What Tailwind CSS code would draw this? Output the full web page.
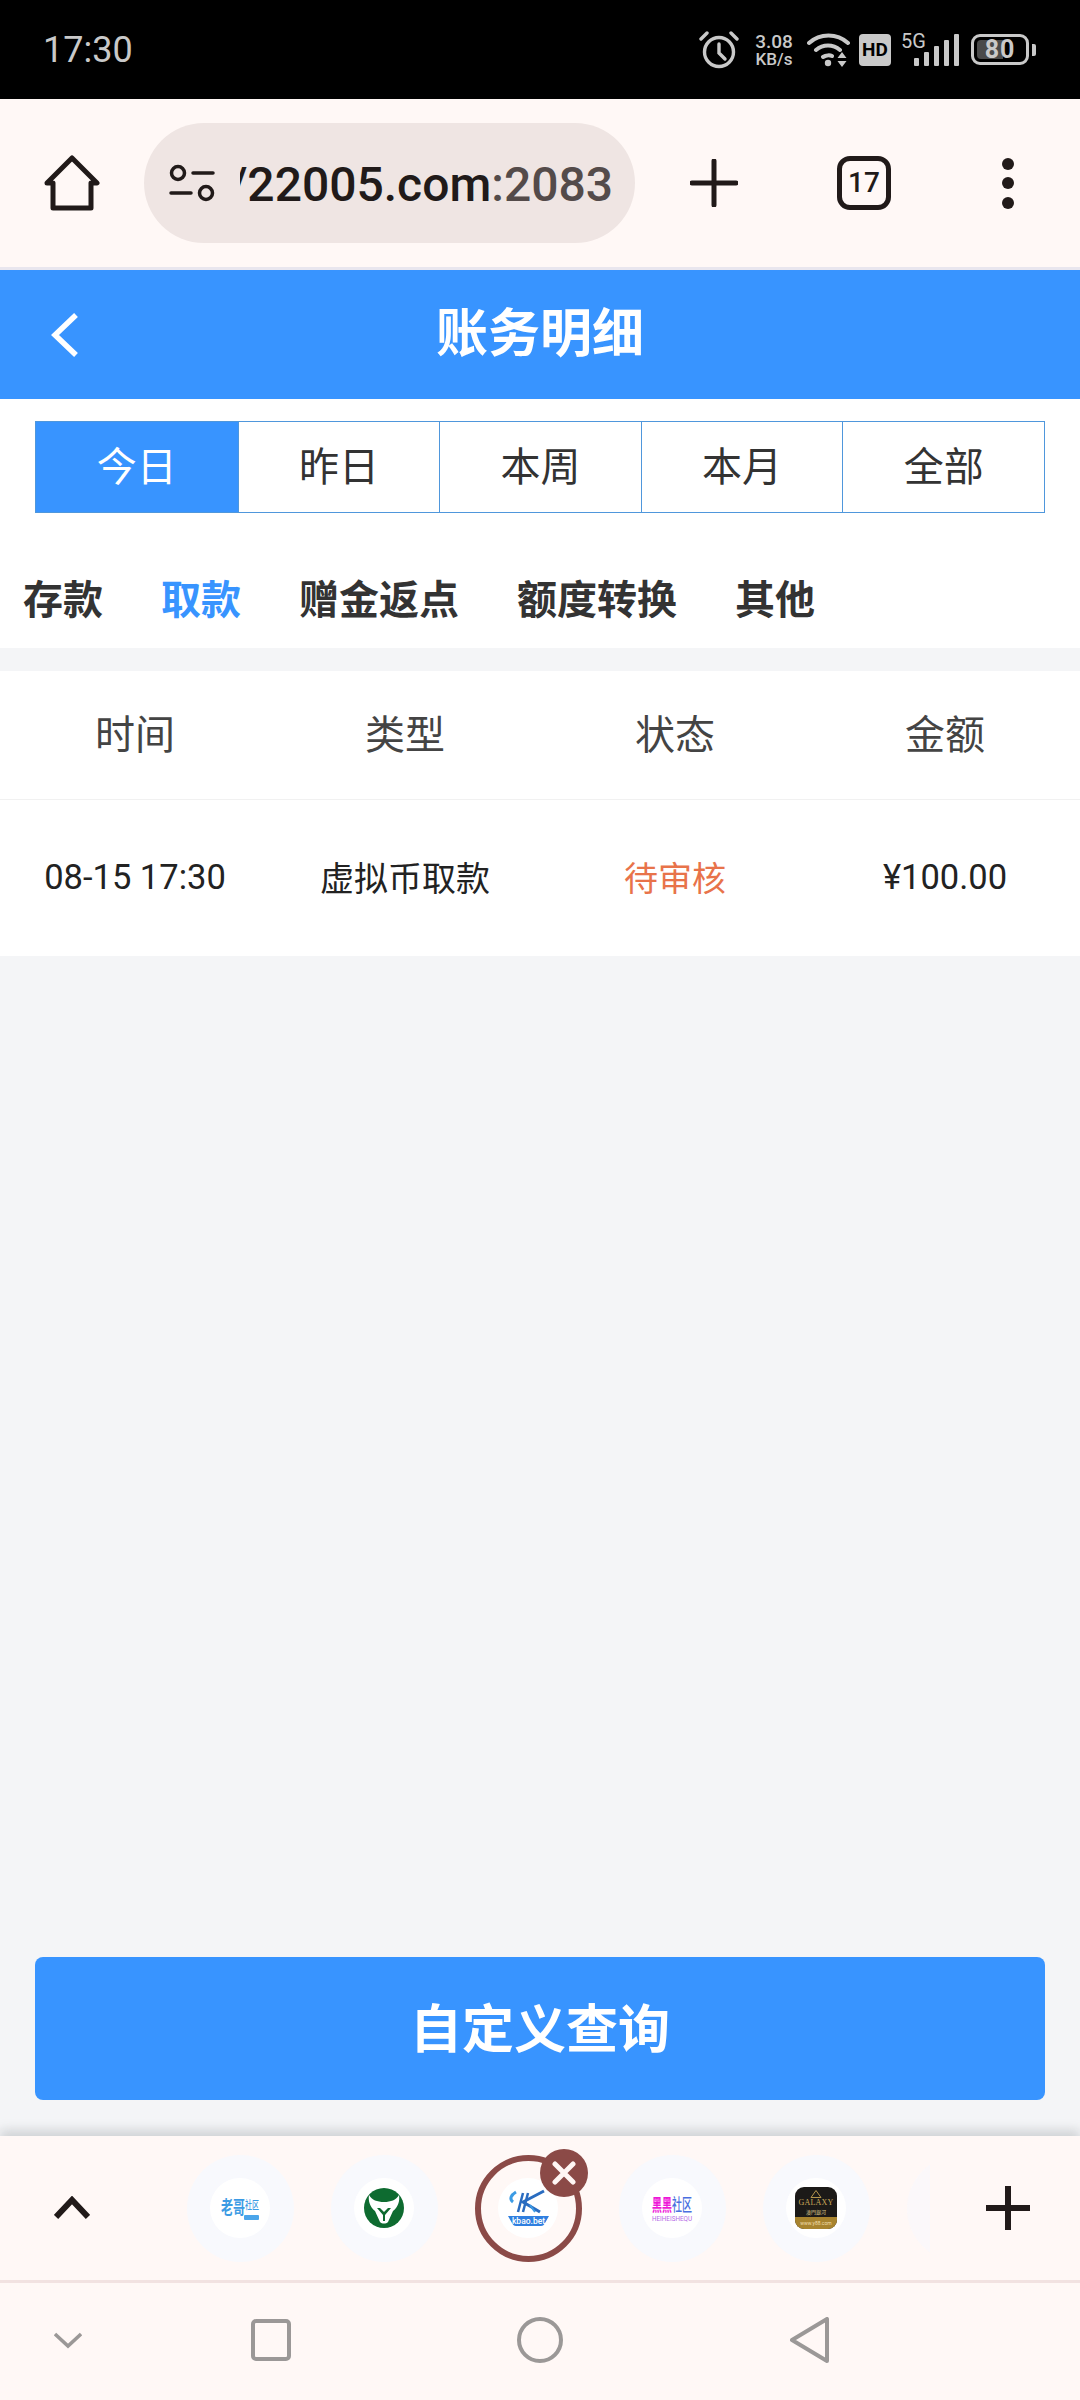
<!DOCTYPE html>
<html lang="zh-CN">
<head>
<meta charset="utf-8">
<title>账务明细</title>
<script src="https://cdn.jsdelivr.net/npm/@tailwindcss/browser@4"></script>
</head>
<body class="w-[1080px] h-[2400px] overflow-hidden flex flex-col bg-[#f4f5f7] font-['Roboto','Noto_Sans_CJK_SC',sans-serif] text-[#333]">

<!-- status bar -->
<div class="h-[99px] shrink-0 bg-black flex items-center justify-between pl-[43px] pr-[44px] text-[#c9c9c9]">
  <span class="text-[36px] leading-none font-['Roboto']">17:30</span>
  <div class="flex items-center">
    <svg width="40" height="38" viewBox="0 0 40 38" fill="none" stroke="#c9c9c9" stroke-width="3.4" stroke-linecap="round">
      <circle cx="20" cy="21" r="14.5"/><path d="M20 13v9l6 6"/><path d="M2 8l6-6M38 8l-6-6"/>
    </svg>
    <div class="w-[46px] ml-[12px] flex flex-col items-center font-['Roboto'] font-medium">
      <span class="text-[19px] leading-[19px]">3.08</span>
      <span class="text-[17px] leading-[17px]">KB/s</span>
    </div>
    <svg class="ml-[10px]" width="44" height="36" viewBox="0 0 44 36" fill="none" stroke="#c9c9c9" stroke-width="4" stroke-linecap="round">
      <path d="M2 11C13 1 30 1 41 11M9 18c7-6 17-6 24 0M16 25c3-2 7-2 9-1"/>
      <circle cx="21" cy="31" r="3.2" fill="#c9c9c9" stroke="none"/>
      <path d="M35 20l4.500 6h-9zM30.500 29h9l-4.500 6z" fill="#c9c9c9" stroke="none"/>
    </svg>
    <div class="ml-[8px] w-[32px] h-[32px] rounded-[4px] bg-[#c9c9c9] flex items-center justify-center text-black text-[19px] font-bold leading-none font-['Roboto']">HD</div>
    <div class="relative ml-[10px] w-[60px] h-[32px]">
      <span class="absolute left-0 top-[-3px] text-[20px] leading-none font-['Roboto']">5G</span>
      <svg class="absolute left-[13px] top-0" width="47" height="32" viewBox="0 0 47 32" fill="#c9c9c9">
        <rect x="0" y="24" width="5" height="8" rx="1"/><rect x="10" y="18" width="5" height="14" rx="1"/><rect x="20" y="12" width="5" height="20" rx="1"/><rect x="30" y="6" width="5" height="26" rx="1"/><rect x="40" y="0" width="5" height="32" rx="1"/>
      </svg>
    </div>
    <div class="ml-[10px] relative w-[58px] h-[31px] rounded-[9px] border-[3px] border-[#c9c9c9] flex items-center justify-center">
      <div class="absolute left-[3px] top-[3px] bottom-[3px] w-[26px] rounded-l-[4px] bg-[#4a4a4a]"></div>
      <span class="relative text-[25px] leading-none font-bold font-['Roboto'] tracking-[1px]">80</span>
    </div>
    <div class="ml-[3px] w-[4px] h-[12px] rounded-r-[2px] bg-[#c9c9c9]"></div>
  </div>
</div>

<!-- browser toolbar -->
<div class="h-[171px] shrink-0 bg-[#fff8f6] border-b-[3px] border-[#e9e6ee] flex items-center relative text-[#211a19]">
  <div class="w-[144px] shrink-0 flex justify-center">
    <svg width="56" height="56" viewBox="0 0 56 56" fill="none" stroke="#211a19" stroke-width="5" stroke-linejoin="round" stroke-linecap="round">
      <path d="M9 28H3L28 3l25 25h-6v25H9z"/>
    </svg>
  </div>
  <div class="w-[491px] h-[120px] shrink-0 rounded-full bg-[#efe5e3] flex items-center pl-[25px]">
    <svg width="46" height="38" viewBox="0 0 46 38" fill="none" stroke="#211a19" stroke-width="3.500" stroke-linecap="round">
      <circle cx="9" cy="9" r="6.500"/><path d="M24 9h20M2 29h20"/><circle cx="37" cy="29" r="6.500"/>
    </svg>
    <div class="ml-[25px] w-[373px] overflow-hidden flex justify-end whitespace-nowrap text-[48px] leading-[64px] font-medium font-['Roboto'] pt-[3px]">
      <span>/22005.com<span class="text-[#544b4a]">:2083</span></span>
    </div>
  </div>
  <div class="flex-1 flex items-center">
    <div class="w-[150px] flex justify-center pl-[8px]">
      <svg width="48" height="48" viewBox="0 0 48 48" stroke="#211a19" stroke-width="5" stroke-linecap="round"><path d="M24 2v44M2 24h44"/></svg>
    </div>
    <div class="w-[54px] h-[54px] ml-[52px] rounded-[13px] border-[5px] border-[#211a19] flex items-center justify-center text-[28px] font-medium leading-none font-['Roboto']">17</div>
    <div class="ml-[111px] flex flex-col gap-[7.500px]">
      <span class="block w-[12px] h-[12px] rounded-full bg-[#211a19]"></span>
      <span class="block w-[12px] h-[12px] rounded-full bg-[#211a19]"></span>
      <span class="block w-[12px] h-[12px] rounded-full bg-[#211a19]"></span>
    </div>
  </div>
</div>

<!-- page header -->
<div class="h-[129px] shrink-0 bg-[#3894ff] relative flex items-center justify-center text-white">
  <svg class="absolute left-[50px] top-[42px]" width="30" height="46" viewBox="0 0 30 46" fill="none" stroke="#fff" stroke-width="5.500"><path d="M26 3L5 23l21 20"/></svg>
  <span class="text-[52px] leading-none font-bold font-['Noto_Sans_CJK_SC'] mt-[-10px]">账务明细</span>
</div>

<!-- range and type filters -->
<div class="h-[249px] shrink-0 bg-white flex flex-col">
  <div class="mt-[22px] mx-[35px] h-[92px] grid grid-cols-5 border border-[#4f97dc] text-[40px] font-['Noto_Sans_CJK_SC'] font-normal">
    <div class="bg-[#3894ff] text-white flex items-center justify-center pb-[7px]">今日</div>
    <div class="border-l border-[#4f97dc] flex items-center justify-center pb-[7px]">昨日</div>
    <div class="border-l border-[#4f97dc] flex items-center justify-center pb-[7px]">本周</div>
    <div class="border-l border-[#4f97dc] flex items-center justify-center pb-[7px]">本月</div>
    <div class="border-l border-[#4f97dc] flex items-center justify-center pb-[7px]">全部</div>
  </div>
  <div class="mt-[54px] pl-[23px] flex gap-[58px] text-[40px] leading-[60px] font-bold font-['Noto_Sans_CJK_SC']">
    <span>存款</span>
    <span class="text-[#3894ff]">取款</span>
    <span>赠金返点</span>
    <span>额度转换</span>
    <span>其他</span>
  </div>
</div>

<!-- records -->
<div class="flex-1 flex flex-col pt-[23px]">
  <div class="bg-white">
    <div class="h-[129px] grid grid-cols-4 items-center text-center text-[40px] font-['Noto_Sans_CJK_SC'] font-normal text-[#444] border-b border-[#f1f1f1] pb-[6px]">
      <span>时间</span><span>类型</span><span>状态</span><span>金额</span>
    </div>
    <div class="h-[156px] grid grid-cols-4 items-center text-center text-[34.500px] font-['Roboto','Noto_Sans_CJK_SC'] text-[#222]">
      <span>08-15 17:30</span>
      <span class="text-[34px] font-['Noto_Sans_CJK_SC'] font-normal pb-[4px]">虚拟币取款</span>
      <span class="text-[34px] text-[#e8734a] font-['Noto_Sans_CJK_SC'] font-normal pb-[4px]">待审核</span>
      <span>¥100.00</span>
    </div>
  </div>
  <div class="mt-auto mx-[35px] mb-[36px] h-[143px] rounded-[8px] bg-[#3894ff] flex items-center justify-center text-white text-[52px] font-bold font-['Noto_Sans_CJK_SC'] pb-[6px]">自定义查询</div>
</div>

<!-- tab strip -->
<div class="h-[147px] shrink-0 bg-[#fff8f6] border-b-[3px] border-[#f2e2e1] flex items-center relative shadow-[0_-6px_10px_rgba(120,125,130,0.28)]">
  <div class="w-[144px] shrink-0 flex justify-center">
    <svg width="36" height="24" viewBox="0 0 36 24" fill="none" stroke="#211a19" stroke-width="6"><path d="M2 21L18 4l16 17"/></svg>
  </div>
  <div class="w-[24px] shrink-0"></div>
  <div class="w-[762px] shrink-0 overflow-hidden flex items-center h-full">
    <div class="w-[144px] shrink-0 flex justify-center">
      <div class="w-[107px] h-[107px] rounded-full bg-[#f8f9fd] flex items-center justify-center">
        <div class="w-[60px] h-[60px] rounded-full bg-white flex items-center justify-center">
          <svg class="overflow-visible" width="38" height="28" viewBox="0 0 38 28">
            <text transform="scale(1 1.5)" x="0" y="13" font-family="Noto Sans CJK SC" font-size="12" font-weight="700" fill="#3c9be4">老哥</text>
            <text transform="scale(1 1.7)" x="24" y="9" font-family="Noto Sans CJK SC" font-size="7" font-weight="500" fill="#3c9be4">社区</text>
            <rect x="23" y="21" width="15" height="5" rx="1" fill="#4ba5ea"/>
          </svg>
        </div>
      </div>
    </div>
    <div class="w-[144px] shrink-0 flex justify-center">
      <div class="w-[107px] h-[107px] rounded-full bg-[#f8f9fd] flex items-center justify-center">
        <div class="w-[60px] h-[60px] rounded-full bg-white flex items-center justify-center">
          <svg width="40" height="40" viewBox="0 0 40 40">
            <circle cx="20" cy="20" r="20" fill="#0e6b30"/>
            <path d="M5 7c3 5 8 7 15 7s12-2 15-7c1 6-1 12-6 16l-5 11c-2 2-6 2-8 0l-5-11C6 19 4 13 5 7z" fill="#fff"/>
            <path d="M13 20l6 7v6h2v-6l6-7-3 0-4 4-4-4z" fill="#0e6b30"/>
          </svg>
        </div>
      </div>
    </div>
    <div class="w-[144px] shrink-0 flex justify-center">
      <div class="w-[107px] h-[107px] rounded-full border-[6px] border-[#8b4a47] flex items-center justify-center">
        <div class="w-[60px] h-[60px] rounded-full bg-white flex items-center justify-center">
          <svg class="overflow-visible" width="41" height="36" viewBox="0 0 41 36">
            <path d="M8 2C3 5 1 9 5 12" fill="none" stroke="#3c9be4" stroke-width="3"/>
            <path d="M15 3L10 22M20 3L15 22" stroke="#2a6cc0" stroke-width="2.500" fill="none"/>
            <path d="M36 1L15 12l17 10" stroke="#2a6cc0" stroke-width="3" fill="none"/>
            <path d="M22 15l5 7" stroke="#3c9be4" stroke-width="2" fill="none"/>
            <path d="M0 26h41l-4 7c-1 2-2 3-4 3H8c-2 0-3-1-4-3z" fill="#2f7fe0"/>
            <text x="20.500" y="34" text-anchor="middle" font-family="Roboto" font-size="8.500" font-weight="500" fill="#fff">kbao.bet</text>
          </svg>
        </div>
      </div>
    </div>
    <div class="w-[144px] shrink-0 flex justify-center">
      <div class="w-[107px] h-[107px] rounded-full bg-[#f8f9fd] flex items-center justify-center">
        <div class="w-[60px] h-[60px] rounded-full bg-white flex items-center justify-center">
          <svg class="overflow-visible" width="40" height="28" viewBox="0 0 40 28">
            <text transform="scale(1 1.7)" x="0" y="10" font-family="Noto Sans CJK SC" font-size="10" font-weight="700" fill="#ee18d8">黑黑</text>
            <text transform="scale(1 1.7)" x="20" y="10" font-family="Noto Sans CJK SC" font-size="10" font-weight="500" fill="#4a6fe0">社区</text>
            <text x="0" y="27" textLength="40" lengthAdjust="spacingAndGlyphs" font-family="Roboto" font-size="8" fill="#b56ae6">HEIHEISHEQU</text>
          </svg>
        </div>
      </div>
    </div>
    <div class="w-[144px] shrink-0 flex justify-center">
      <div class="w-[107px] h-[107px] rounded-full bg-[#f8f9fd] flex items-center justify-center">
        <div class="w-[60px] h-[60px] rounded-full bg-white flex items-center justify-center">
          <div class="w-[42px] h-[42px] rounded-[9px] overflow-hidden bg-[#1c1a18] flex flex-col items-center text-[#c9a95a]">
            <svg width="12" height="8" viewBox="0 0 12 8" class="mt-[3px]" fill="none" stroke="#b4954d"><path d="M6 .5L11 7.500H1z"/></svg>
            <span class="text-[8px] leading-[9px] font-['Liberation_Serif'] tracking-[0.2px]">GALAXY</span>
            <span class="text-[5px] leading-[9px] font-['Noto_Sans_CJK_SC'] text-[#d8c48a]">澳門銀河</span>
            <div class="mt-auto w-full h-[12px] bg-[#a8842f] text-[5px] leading-[12px] text-center text-[#f0dfae]">www.y88.com</div>
          </div>
        </div>
      </div>
    </div>
    <div class="w-[144px] shrink-0 flex justify-center opacity-60">
      <div class="w-[107px] h-[107px] rounded-full bg-[#f8f9fd]"></div>
    </div>
  </div>
  <div class="flex-1 flex justify-center pl-[6px]">
    <svg width="44" height="44" viewBox="0 0 44 44" stroke="#211a19" stroke-width="6"><path d="M22 0v44M0 22h44"/></svg>
  </div>
  <!-- close badge on the active tab -->
  <div class="absolute left-[540px] top-[13px] w-[48px] h-[48px] rounded-full bg-[#8b4a47] flex items-center justify-center">
    <svg width="24" height="24" viewBox="0 0 24 24" stroke="#fff6f4" stroke-width="5" stroke-linecap="round"><path d="M3 3l18 18M21 3L3 21"/></svg>
  </div>
</div>

<!-- navigation bar -->
<div class="h-[117px] shrink-0 bg-[#fff8f6] flex items-center relative pb-[3px]">
  <div class="w-[136px] flex justify-center">
    <svg width="28" height="17" viewBox="0 0 28 17" fill="none" stroke="#9b9897" stroke-width="3.500"><path d="M1 2l13 12L27 2"/></svg>
  </div>
  <svg class="ml-[115px]" width="40" height="42" viewBox="0 0 40 42" fill="none" stroke="#9b9897" stroke-width="4"><rect x="2" y="2" width="36" height="38" rx="3"/></svg>
  <svg class="ml-[226px]" width="46" height="46" viewBox="0 0 46 46" fill="none" stroke="#9b9897" stroke-width="4"><circle cx="23" cy="23" r="21"/></svg>
  <svg class="ml-[227px]" width="40" height="46" viewBox="0 0 40 46" fill="none" stroke="#9b9897" stroke-width="4" stroke-linejoin="round"><path d="M37 2v42L2 23z"/></svg>
</div>

</body>
</html>
